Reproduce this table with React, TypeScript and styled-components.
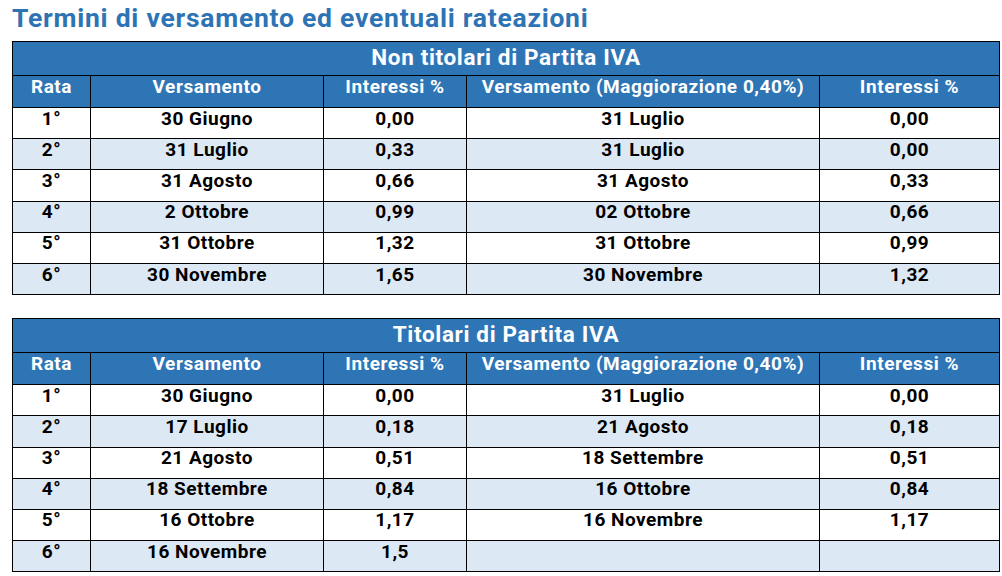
import React from "react";
import styled, { createGlobalStyle } from "styled-components";

const Global = createGlobalStyle`
  html, body { margin: 0; padding: 0; background: #ffffff; }
  body { font-family: Roboto, "Liberation Sans", Arial, sans-serif; }
`;

const Page = styled.div`
  width: 1002px;
  padding: 0 0 0 12px;
  box-sizing: border-box;
  display: flex;
  flex-direction: column;
`;

const Title = styled.h1`
  margin: 0;
  height: 41px;
  line-height: 36px;
  font-size: 26.5px;
  font-weight: 700;
  color: #2e74b5;
  letter-spacing: 0.75px;
  white-space: nowrap;
`;

const Table = styled.table<{ $gap?: boolean }>`
  width: 987px;
  border-collapse: collapse;
  table-layout: fixed;
  margin-top: ${(p) => (p.$gap ? "23px" : "0")};
  font-family: Roboto, "Liberation Sans", Arial, sans-serif;
`;

const CaptionRow = styled.tr`
  height: 34px;
  background: #2e75b6;
`;

const CaptionCell = styled.th`
  border: 1px solid #000;
  color: #fff;
  font-size: 22.5px;
  font-weight: 700;
  letter-spacing: 0.65px;
  text-align: center;
  padding: 0 0 4px;
  vertical-align: middle;
`;

const HeadRow = styled.tr`
  height: 32px;
  background: #2e75b6;
`;

const HeadCell = styled.th`
  border: 1px solid #000;
  color: #fff;
  font-size: 19px;
  line-height: 20px;
  font-weight: 700;
  letter-spacing: 0.55px;
  text-align: center;
  padding: 0 0 9px;
  vertical-align: middle;
  white-space: nowrap;
`;

const Row = styled.tr<{ $alt: boolean }>`
  height: 31.2px;
  background: ${(p) => (p.$alt ? "#dde8f5" : "#ffffff")};
`;

const Cell = styled.td`
  border: 1px solid #000;
  color: #000;
  font-size: 19px;
  line-height: 20px;
  font-weight: 700;
  letter-spacing: 0.5px;
  text-align: center;
  padding: 0 0 9px;
  vertical-align: middle;
  white-space: nowrap;
`;

const widths = [78, 233, 143, 353, 180];

type RowData = [string, string, string, string, string];

const nonTitolari: RowData[] = [
  ["1°", "30 Giugno", "0,00", "31 Luglio", "0,00"],
  ["2°", "31 Luglio", "0,33", "31 Luglio", "0,00"],
  ["3°", "31 Agosto", "0,66", "31 Agosto", "0,33"],
  ["4°", "2 Ottobre", "0,99", "02 Ottobre", "0,66"],
  ["5°", "31 Ottobre", "1,32", "31 Ottobre", "0,99"],
  ["6°", "30 Novembre", "1,65", "30 Novembre", "1,32"],
];

const titolari: RowData[] = [
  ["1°", "30 Giugno", "0,00", "31 Luglio", "0,00"],
  ["2°", "17 Luglio", "0,18", "21 Agosto", "0,18"],
  ["3°", "21 Agosto", "0,51", "18 Settembre", "0,51"],
  ["4°", "18 Settembre", "0,84", "16 Ottobre", "0,84"],
  ["5°", "16 Ottobre", "1,17", "16 Novembre", "1,17"],
  ["6°", "16 Novembre", "1,5", "", ""],
];

const headers = [
  "Rata",
  "Versamento",
  "Interessi %",
  "Versamento (Maggiorazione 0,40%)",
  "Interessi %",
];

function RateTable({ caption, rows, gap }: { caption: string; rows: RowData[]; gap?: boolean }) {
  return (
    <Table $gap={gap}>
      <colgroup>
        {widths.map((w, i) => (
          <col key={i} style={{ width: w }} />
        ))}
      </colgroup>
      <thead>
        <CaptionRow>
          <CaptionCell colSpan={5}>{caption}</CaptionCell>
        </CaptionRow>
        <HeadRow>
          {headers.map((h, i) => (
            <HeadCell key={i}>{h}</HeadCell>
          ))}
        </HeadRow>
      </thead>
      <tbody>
        {rows.map((r, i) => (
          <Row key={i} $alt={i % 2 === 1}>
            {r.map((c, j) => (
              <Cell key={j}>{c}</Cell>
            ))}
          </Row>
        ))}
      </tbody>
    </Table>
  );
}

export default function App() {
  return (
    <>
      <Global />
      <Page>
        <Title>Termini di versamento ed eventuali rateazioni</Title>
        <RateTable caption="Non titolari di Partita IVA" rows={nonTitolari} />
        <RateTable caption="Titolari di Partita IVA" rows={titolari} gap />
      </Page>
    </>
  );
}
